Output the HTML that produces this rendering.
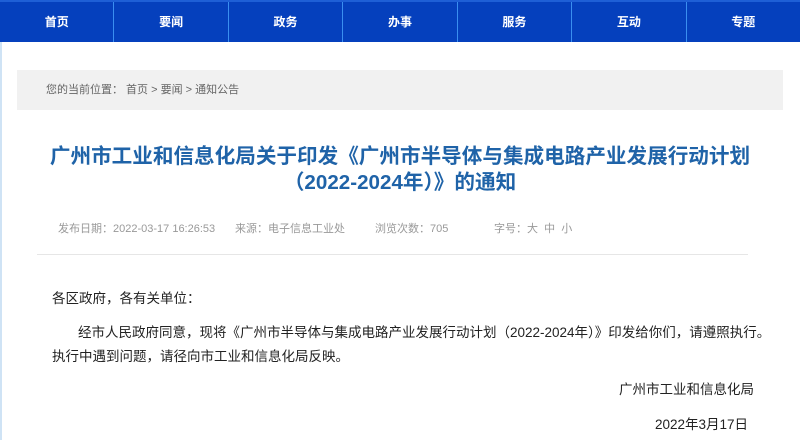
<!DOCTYPE html>
<html><head><meta charset="utf-8"><style>
body{margin:0;width:800px;height:440px;overflow:hidden;background:#fff;font-family:"Liberation Sans","Noto Sans CJK SC",sans-serif;position:relative}
.nav{position:absolute;left:0;top:0;width:800px;height:42px;background:#0540bd;border-top:2px solid #1e5fd6;box-sizing:border-box;display:flex}
.nav div{flex:1;color:#fff;font-weight:bold;font-size:12px;text-align:center;line-height:40px;border-right:1px solid #3a8ff0}
.nav div:last-child{border-right:none}
.crumb{position:absolute;left:17px;top:70px;width:766px;height:40px;background:#f1f1f1;font-size:11px;color:#666;line-height:40px;padding-left:29px;box-sizing:border-box}
.title{position:absolute;left:0;width:800px;text-align:center;color:#1f63a8;font-weight:bold;font-size:20.6px;line-height:26px;top:144px}
.meta{position:absolute;top:220px;font-size:11px;color:#999}
.hr{position:absolute;left:37px;top:254px;width:711px;height:1px;background:#e6e6e6}
.p{position:absolute;font-size:13.5px;color:#222;white-space:nowrap}
.edge{position:absolute;left:0;top:42px;width:2px;height:398px;background:#cfe3f5}
</style></head><body>
<div class="nav"><div>首页</div><div>要闻</div><div>政务</div><div>办事</div><div>服务</div><div>互动</div><div>专题</div></div>
<div class="edge"></div>
<div class="crumb">您的当前位置：&nbsp;首页 &gt; 要闻 &gt; 通知公告</div>
<div class="title">广州市工业和信息化局关于印发《广州市半导体与集成电路产业发展行动计划<br>（2022-2024年）》的通知</div>
<div class="meta" style="left:58px">发布日期：2022-03-17 16:26:53</div>
<div class="meta" style="left:235px">来源：电子信息工业处</div>
<div class="meta" style="left:375px">浏览次数：705</div>
<div class="meta" style="left:494px">字号：大&nbsp;&nbsp;中&nbsp;&nbsp;小</div>
<div class="hr"></div>
<div class="p" style="left:52px;top:287px">各区政府，各有关单位：</div>
<div class="p" style="left:78px;top:321px">经市人民政府同意，现将《广州市半导体与集成电路产业发展行动计划（2022-2024年）》印发给你们，请遵照执行。</div>
<div class="p" style="left:52px;top:345px">执行中遇到问题，请径向市工业和信息化局反映。</div>
<div class="p" style="left:619px;top:378px">广州市工业和信息化局</div>
<div class="p" style="left:655px;top:413px">2022年3月17日</div>
</body></html>
